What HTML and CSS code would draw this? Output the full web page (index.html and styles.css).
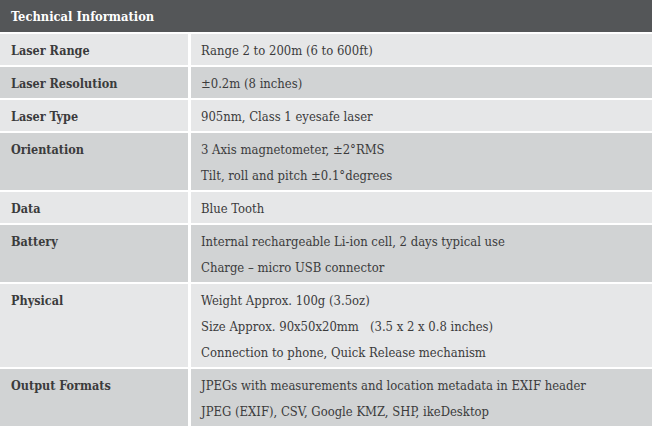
FILE: index.html
```html
<!DOCTYPE html>
<html>
<head>
<meta charset="utf-8">
<link rel="stylesheet" href="styles.css">
</head>
<body>
<div class="spec">
  <div class="head">Technical Information</div>
  <div class="grid">
    <div class="lbl light">Laser Range</div>
    <div class="val light"><div>Range 2 to 200m (6 to 600ft)</div></div>

    <div class="lbl dark">Laser Resolution</div>
    <div class="val dark"><div>±0.2m (8 inches)</div></div>

    <div class="lbl light">Laser Type</div>
    <div class="val light"><div>905nm, Class 1 eyesafe laser</div></div>

    <div class="lbl dark">Orientation</div>
    <div class="val dark"><div>3 Axis magnetometer, ±2°RMS</div><div>Tilt, roll and pitch ±0.1°degrees</div></div>

    <div class="lbl light">Data</div>
    <div class="val light"><div>Blue Tooth</div></div>

    <div class="lbl dark">Battery</div>
    <div class="val dark"><div>Internal rechargeable Li-ion cell, 2 days typical use</div><div>Charge – micro USB connector</div></div>

    <div class="lbl light">Physical</div>
    <div class="val light"><div>Weight Approx. 100g (3.5oz)</div><div>Size Approx. 90x50x20mm &nbsp;&nbsp;(3.5 x 2 x 0.8 inches)</div><div>Connection to phone, Quick Release mechanism</div></div>

    <div class="lbl dark">Output Formats</div>
    <div class="val dark"><div>JPEGs with measurements and location metadata in EXIF header</div><div>JPEG (EXIF), CSV, Google KMZ, SHP, ikeDesktop</div></div>
  </div>
</div>
</body>
</html>
```
FILE: styles.css
```css
html, body {
  margin: 0;
  padding: 0;
  background: #ffffff;
}
.spec {
  width: 652px;
  font-family: "DejaVu Serif Condensed", "DejaVu Serif", serif;
  font-size: 12.5px;
  color: #3b3b3c;
}
.head {
  height: 32px;
  background: #545658;
  color: #ffffff;
  font-weight: bold;
  font-size: 12.8px;
  line-height: 33px;
  padding-left: 11px;
  margin-bottom: 2px;
}
.grid {
  display: grid;
  grid-template-columns: 188px 1fr;
  column-gap: 3px;
  row-gap: 2px;
}
.lbl, .val {
  padding: 3.5px 0 1.5px 0;
  line-height: 26px;
}
.lbl {
  font-weight: bold;
  padding-left: 11px;
}
.val {
  padding-left: 10px;
  font-size: 12.95px;
}
.light { background: #e6e7e8; }
.dark { background: #d1d3d4; }
```
